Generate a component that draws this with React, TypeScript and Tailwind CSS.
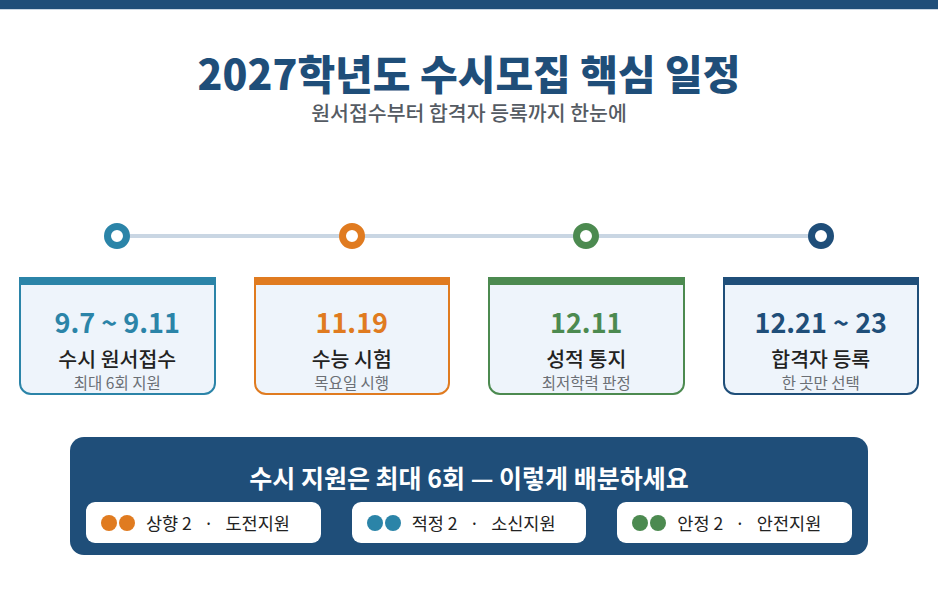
const font = { fontFamily: '"Noto Sans CJK KR", "Noto Sans", sans-serif' };

type Step = {
  date: string;
  title: string;
  sub: string;
  ring: string;
  text: string;
  card: string;
};

const steps: Step[] = [
  {
    date: "9.7 ~ 9.11",
    title: "수시 원서접수",
    sub: "최대 6회 지원",
    ring: "border-[#2b84a8]",
    text: "text-[#2b84a8]",
    card: "border-[#2b84a8]",
  },
  {
    date: "11.19",
    title: "수능 시험",
    sub: "목요일 시행",
    ring: "border-[#e07b20]",
    text: "text-[#e07b20]",
    card: "border-[#e07b20]",
  },
  {
    date: "12.11",
    title: "성적 통지",
    sub: "최저학력 판정",
    ring: "border-[#4c8a50]",
    text: "text-[#4c8a50]",
    card: "border-[#4c8a50]",
  },
  {
    date: "12.21 ~ 23",
    title: "합격자 등록",
    sub: "한 곳만 선택",
    ring: "border-[#1f4e79]",
    text: "text-[#1f4e79]",
    card: "border-[#1f4e79]",
  },
];

const mixes = [
  { dot: "bg-[#e07b20]", label: "상향 2", kind: "도전지원" },
  { dot: "bg-[#2b84a8]", label: "적정 2", kind: "소신지원" },
  { dot: "bg-[#4c8a50]", label: "안정 2", kind: "안전지원" },
];

export default function App() {
  return (
    <div className="w-[938px] h-[594px] bg-white overflow-hidden" style={font}>
      {/* top band */}
      <div className="h-[9px] bg-[#1f4e79]" />
      <div className="h-px bg-[#c9d6e3]" />

      {/* heading */}
      <div className="pt-[39px] text-center">
        <h1 className="text-[41px] leading-[46px] font-black text-[#1f4e79]">
          2027학년도 수시모집 핵심 일정
        </h1>
        <p className="mt-[4px] text-[20.5px] leading-[26px] font-medium text-[#555b63]">
          원서접수부터 합격자 등록까지 한눈에
        </p>
      </div>

      {/* timeline */}
      <div className="relative mt-[98px] h-[26px] px-[19px]">
        <div className="absolute left-[117px] right-[118px] top-[11px] h-[4px] bg-[#c9d6e3]" />
        <div className="relative grid grid-cols-4 gap-x-[38px]">
          {steps.map((s) => (
            <div key={s.date} className="flex justify-center">
              <div className={`w-[26px] h-[26px] rounded-full border-[7px] bg-white ${s.ring}`} />
            </div>
          ))}
        </div>
      </div>

      {/* cards */}
      <div className="mt-[28px] px-[19px] grid grid-cols-4 gap-x-[38px]">
        {steps.map((s) => (
          <div
            key={s.date}
            className={`h-[118px] border-2 border-t-[8px] rounded-b-[12px] bg-[#eef4fb] flex flex-col items-center ${s.card}`}
          >
            <div className={`mt-[21px] text-[27px] leading-[32px] font-bold ${s.text}`}>{s.date}</div>
            <div className="mt-[8px] text-[20.5px] leading-[24px] font-medium text-[#222]">{s.title}</div>
            <div className="mt-[2px] text-[15.5px] leading-[20px] text-[#6b6f75]">{s.sub}</div>
          </div>
        ))}
      </div>

      {/* mix panel */}
      <div className="mx-[70px] mt-[42px] h-[118px] rounded-[14px] bg-[#1f4e79] px-[16px] pt-[24px]">
        <h2 className="text-center text-[25px] leading-[32px] font-bold text-white">
          수시 지원은 최대 6회 — 이렇게 배분하세요
        </h2>
        <div className="mt-[9px] grid grid-cols-3 gap-x-[31px]">
          {mixes.map((m) => (
            <div key={m.label} className="h-[41px] rounded-[9px] bg-white flex items-center pl-[15px]">
              <span className={`w-[16px] h-[16px] rounded-full ${m.dot}`} />
              <span className={`ml-[2px] w-[16px] h-[16px] rounded-full ${m.dot}`} />
              <span className="ml-[11px] text-[17.5px] leading-[24px] text-[#222]">
                {m.label} <span className="mx-[8px]">·</span> {m.kind}
              </span>
            </div>
          ))}
        </div>
      </div>
    </div>
  );
}
